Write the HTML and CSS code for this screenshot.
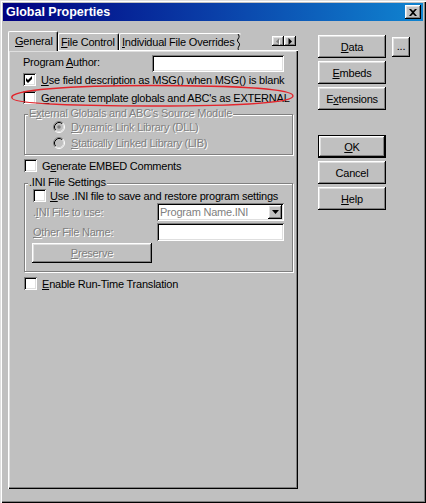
FILE: index.html
```html
<!DOCTYPE html>
<html>
<head>
<meta charset="utf-8">
<link rel="stylesheet" href="styles.css">
</head>
<body>
<div class="window">
  <div class="titlebar">
    <span class="title">Global Properties</span>
    <div class="close">
      <svg width="8" height="7" viewBox="0 0 8 7"><path d="M0 0h2l2 2 2-2h2L5 3.5 8 7H6L4 5 2 7H0l3-3.5z" fill="#000"/></svg>
    </div>
  </div>
  <div class="client">
    <div class="tabarea">
      <div class="tabstrip">
        <div class="tab sel"><u>G</u>eneral</div>
        <div class="tab t-file"><u>F</u>ile Control</div>
        <div class="tab t-indiv"><span class="tab-text"><u>I</u>ndividual File Overrides</span><svg class="torn" width="5" height="17" viewBox="0 0 5 17"><path d="M1.5 0.5C3.5 2.5 3.5 4 2 6C1 7.5 1.5 8.5 3 10C4 11 3.5 12.5 2.5 14C2 15 2 16 2.5 17" fill="none" stroke="#000" stroke-width="1"/></svg></div>
        <div class="spin">
          <div class="sb"><svg width="8" height="7" viewBox="0 0 8 7"><path d="M2 3.5L5 0.5V6.5Z" fill="#fff" transform="translate(1 1)"/><path d="M2 3.5L5 0.5V6.5Z" fill="#808080"/></svg></div>
          <div class="sb"><svg width="6" height="7" viewBox="0 0 6 7"><path d="M1.5 0V7L5 3.5Z" fill="#000"/></svg></div>
        </div>
      </div>
      <div class="sheet">
        <div class="row-author">
          <span class="lbl-author">Program <u>A</u>uthor:</span>
          <div class="field author-field"></div>
        </div>
        <div class="check cb1">
          <span class="box"><svg width="13" height="13" viewBox="0 0 13 13"><path d="M3 5L5 7L9 3V6L5 10L3 8Z" fill="#000"/></svg></span>
          <span><u>U</u>se field description as MSG() when MSG() is blank</span>
        </div>
        <div class="check cb2">
          <span class="box"></span>
          <span><u>G</u>enerate template globals and ABC's as EXTERNAL</span>
        </div>
        <div class="group g1">
          <div class="legend dis">E<u>x</u>ternal Globals and ABC's Source Module</div>
          <div class="radio">
            <svg width="12" height="12" viewBox="0 0 12 12">
              <circle cx="6" cy="6" r="5" fill="#c0c0c0"/>
              <path d="M2.11 9.89A5.5 5.5 0 0 1 9.89 2.11" fill="none" stroke="#808080"/>
              <path d="M9.89 2.11A5.5 5.5 0 0 1 2.11 9.89" fill="none" stroke="#fff"/>
              <path d="M2.82 9.18A4.5 4.5 0 0 1 9.18 2.82" fill="none" stroke="#000"/>
              <path d="M9.18 2.82A4.5 4.5 0 0 1 2.82 9.18" fill="none" stroke="#dfdfdf"/>
              <circle cx="6" cy="6" r="1.8" fill="#808080"/>
            </svg>
            <span class="dis"><u>D</u>ynamic Link Library (DLL)</span>
          </div>
          <div class="radio">
            <svg width="12" height="12" viewBox="0 0 12 12">
              <circle cx="6" cy="6" r="5" fill="#c0c0c0"/>
              <path d="M2.11 9.89A5.5 5.5 0 0 1 9.89 2.11" fill="none" stroke="#808080"/>
              <path d="M9.89 2.11A5.5 5.5 0 0 1 2.11 9.89" fill="none" stroke="#fff"/>
              <path d="M2.82 9.18A4.5 4.5 0 0 1 9.18 2.82" fill="none" stroke="#000"/>
              <path d="M9.18 2.82A4.5 4.5 0 0 1 2.82 9.18" fill="none" stroke="#dfdfdf"/>
            </svg>
            <span class="dis"><u>S</u>tatically Linked Library (LIB)</span>
          </div>
        </div>
        <div class="check embed">
          <span class="box"></span>
          <span>G<u>e</u>nerate EMBED Comments</span>
        </div>
        <div class="group g2">
          <div class="legend">.INI File Settings</div>
          <div class="check cb-ini">
            <span class="box"></span>
            <span><u>U</u>se .INI file to save and restore program settings</span>
          </div>
          <div class="field-row fr1">
            <span class="fr-label dis">.<u>I</u>NI File to use:</span>
            <div class="field combo">
              <span class="combo-text">Program Name.INI</span>
              <span class="dd"><svg width="7" height="4" viewBox="0 0 7 4"><path d="M0 0H7L3.5 4Z" fill="#000"/></svg></span>
            </div>
          </div>
          <div class="field-row fr2">
            <span class="fr-label dis"><u>O</u>ther File Name:</span>
            <div class="field other-field"></div>
          </div>
          <div class="btn preserve"><span class="dis"><u>P</u>reserve</span></div>
        </div>
        <div class="check translate">
          <span class="box"></span>
          <span><u>E</u>nable Run-Time Translation</span>
        </div>
      </div>
    </div>
    <div class="side">
      <div class="side-row">
        <div class="btn sbtn"><u>D</u>ata</div>
        <div class="btn dots">...</div>
      </div>
      <div class="btn sbtn"><u>E</u>mbeds</div>
      <div class="btn sbtn">E<u>x</u>tensions</div>
      <div class="btn sbtn default ok"><u>O</u>K</div>
      <div class="btn sbtn">Cancel</div>
      <div class="btn sbtn"><u>H</u>elp</div>
    </div>
  </div>
  <svg class="annot" width="426" height="503" viewBox="0 0 426 503">
    <path d="M12 98C8 90 70 85.5 152 85.5C238 85.5 293 89 293 96C293 103 236 106 152 106C80 106 13 104 12 98Z" fill="none" stroke="#e3242b" stroke-width="1.4"/>
  </svg>
</div>
</body>
</html>
```
FILE: styles.css
```css
html, body {
  margin: 0;
  padding: 0;
}
body {
  width: 426px;
  height: 503px;
  overflow: hidden;
  background: #c0c0c0;
  font-family: "Liberation Sans", Arial, sans-serif;
  font-size: 11px;
  letter-spacing: -0.22px;
  color: #000;
}
u { text-decoration: underline; text-underline-offset: 1px; }

.window {
  position: relative;
  box-sizing: border-box;
  width: 426px;
  height: 503px;
  padding: 3px;
  background: #c0c0c0;
  box-shadow: inset 1px 1px #dfdfdf, inset 2px 2px #fff, inset -1px -1px #000, inset -2px -2px #808080;
}

.titlebar {
  height: 18px;
  display: flex;
  align-items: center;
  justify-content: space-between;
  padding-left: 3px;
  background: linear-gradient(90deg, #000080 0%, #0a3fa8 50%, #1084d0 100%);
}
.title {
  color: #fff;
  font-weight: bold;
  font-size: 12.5px;
  letter-spacing: 0;
}
.close {
  width: 16px;
  height: 14px;
  margin-right: 2px;
  display: flex;
  align-items: center;
  justify-content: center;
  background: #c0c0c0;
  box-shadow: inset -1px -1px #000, inset 1px 1px #fff, inset -2px -2px #808080, inset 2px 2px #dfdfdf;
}

.client {
  display: flex;
  padding: 10px 0 0 5px;
}
.tabarea {
  width: 290px;
  display: flex;
  flex-direction: column;
}
.tabstrip {
  height: 19px;
  display: flex;
  align-items: flex-end;
}
.tab {
  box-sizing: border-box;
  height: 17px;
  line-height: 16px;
  padding-left: 2px;
  white-space: nowrap;
  overflow: hidden;
  background: #c0c0c0;
  border-top: 1px solid #fff;
  border-left: 1px solid #fff;
  border-right: 1px solid #000;
  border-radius: 2px 2px 0 0;
  box-shadow: inset -1px 0 #808080;
  flex: none;
}
.tab.sel {
  position: relative;
  z-index: 1;
  width: 50px;
  height: 20px;
  margin-bottom: -1px;
  line-height: 19px;
  padding-left: 6px;
}
.t-file { width: 61px; }
.t-indiv {
  width: 122px;
  display: flex;
  align-items: flex-start;
  border-right: none;
  box-shadow: none;
}
.torn {
  margin-left: auto;
  margin-top: -1px;
  flex: none;
}
.spin {
  display: flex;
  align-self: flex-start;
  margin: 5px 2px 0 auto;
}
.sb {
  width: 12px;
  height: 10px;
  display: flex;
  align-items: center;
  justify-content: center;
  box-shadow: inset -1px -1px #000, inset 1px 1px #fff, inset -2px -2px #808080, inset 2px 2px #dfdfdf;
}

.sheet {
  box-sizing: border-box;
  height: 439px;
  padding: 5px 0 0 15px;
  box-shadow: inset 1px 1px #fff, inset -1px -1px #000, inset -2px -2px #808080, inset 2px 2px #dfdfdf;
}

.dis {
  color: #808080;
  text-shadow: 1px 1px 0 #fff;
}

.field {
  box-sizing: border-box;
  background: #fff;
  box-shadow: inset 1px 1px #808080, inset -1px -1px #fff, inset 2px 2px #000, inset -2px -2px #dfdfdf;
}

.row-author {
  display: flex;
  align-items: flex-start;
  height: 17px;
}
.lbl-author {
  width: 129px;
  line-height: 14px;
}
.author-field {
  width: 132px;
  height: 17px;
}

.check {
  display: flex;
  align-items: center;
  gap: 5px;
  height: 13px;
  white-space: nowrap;
}
.box {
  box-sizing: border-box;
  width: 13px;
  height: 13px;
  flex: none;
  background: #fff;
  box-shadow: inset 1px 1px #808080, inset -1px -1px #fff, inset 2px 2px #000, inset -2px -2px #dfdfdf;
}
.box svg { display: block; }
.cb1 { margin-top: 1px; }
.cb2 { margin-top: 5px; }
.embed { margin: 4px 0 0 1px; }
.translate { margin: 5px 0 0 1px; }

.group {
  box-sizing: border-box;
  width: 269px;
  margin-left: 1px;
  border: 1px solid #808080;
  box-shadow: inset 1px 1px #fff, 1px 1px #fff;
}
.legend {
  width: fit-content;
  height: 13px;
  line-height: 13px;
  padding: 0 1px;
  background: #c0c0c0;
  white-space: nowrap;
}
.g1 {
  margin-top: 10px;
  padding-bottom: 3px;
}
.g1 .legend { margin: -8px 0 -1px 3px; }
.radio {
  display: flex;
  align-items: center;
  gap: 6px;
  height: 16px;
  padding-left: 28px;
  white-space: nowrap;
}
.radio svg { flex: none; }

.g2 {
  margin-top: 11px;
  padding: 0 0 8px 8px;
}
.g2 .legend { margin: -8px 0 0 -5px; }
.cb-ini { gap: 4px; }
.field-row {
  display: flex;
  align-items: center;
  height: 18px;
}
.fr1 { margin-top: 1px; }
.fr2 { margin-top: 2px; }
.fr-label { width: 124px; white-space: nowrap; }
.combo {
  width: 127px;
  height: 18px;
  display: flex;
  align-items: center;
  padding: 2px;
}
.combo-text {
  flex: 1;
  padding-left: 1px;
  color: #808080;
  white-space: nowrap;
}
.dd {
  width: 14px;
  height: 14px;
  flex: none;
  display: flex;
  align-items: center;
  justify-content: center;
  background: #c0c0c0;
  box-shadow: inset -1px -1px #000, inset 1px 1px #fff, inset -2px -2px #808080, inset 2px 2px #dfdfdf;
}
.other-field {
  width: 127px;
  height: 18px;
}

.btn {
  box-sizing: border-box;
  display: flex;
  align-items: center;
  justify-content: center;
  background: #c0c0c0;
  box-shadow: inset -1px -1px #000, inset 1px 1px #fff, inset -2px -2px #808080, inset 2px 2px #dfdfdf;
}
.preserve {
  width: 120px;
  height: 20px;
  margin: 2px 0 0 -1px;
}

.side {
  margin: 4px 0 0 20px;
  display: flex;
  flex-direction: column;
  gap: 3px;
}
.side-row {
  display: flex;
  align-items: flex-start;
}
.sbtn {
  width: 68px;
  height: 23px;
}
.dots {
  width: 18px;
  height: 20px;
  margin: 2px 0 0 6px;
  padding-bottom: 2px;
}
.ok { margin-top: 22px; }
.default {
  border: 1px solid #000;
  box-shadow: inset -1px -1px #000, inset 1px 1px #fff, inset -2px -2px #808080, inset 2px 2px #dfdfdf;
}

.annot {
  position: absolute;
  left: 0;
  top: 0;
  pointer-events: none;
}
```
